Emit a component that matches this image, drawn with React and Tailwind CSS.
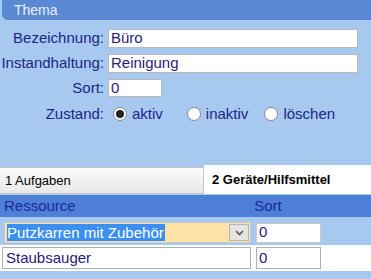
import React from "react";

const Radio = ({ checked, label }) => (
  <label className="flex items-center gap-[5px]">
    <span className="w-[14px] h-[14px] rounded-full bg-white border border-[#8a8a8a] flex items-center justify-center">
      {checked && <span className="w-[8px] h-[8px] rounded-full bg-[#222]" />}
    </span>
    <span>{label}</span>
  </label>
);

const App = () => {
  return (
    <div className="w-[371px] h-[279px] bg-[#a7c9f0] overflow-hidden text-[15px] text-[#1b2585] font-['Liberation_Sans',Arial,sans-serif]">
      <div className="h-[20px] bg-[#5b88d3] rounded-bl-[6px] ml-[2px] flex items-center pl-[12px] text-[14px] text-[#e8eefa]">
        Thema
      </div>

      <div className="flex flex-col pt-[9px]">
        <div className="flex items-center h-[19px]">
          <span className="w-[104px] text-right">Bezeichnung:</span>
          <div className="ml-[4px] w-[250px] h-[19px] bg-white border border-[#b9b9b9] flex items-center pl-[2px] text-[#2b1b74]">Büro</div>
        </div>
        <div className="flex items-center h-[19px] mt-[6px]">
          <span className="w-[104px] text-right">Instandhaltung:</span>
          <div className="ml-[4px] w-[250px] h-[19px] bg-white border border-[#b9b9b9] flex items-center pl-[2px] text-[#2b1b74]">Reinigung</div>
        </div>
        <div className="flex items-center h-[18px] mt-[6px]">
          <span className="w-[104px] text-right">Sort:</span>
          <div className="ml-[4px] w-[54px] h-[18px] bg-white border border-[#b9b9b9] flex items-center pl-[2px] text-[#2b1b74]">0</div>
        </div>
        <div className="flex items-center h-[20px] mt-[7px]">
          <span className="w-[104px] text-right">Zustand:</span>
          <div className="ml-[9px] flex items-center">
            <Radio checked label="aktiv" />
            <div className="ml-[24px]"><Radio label="inaktiv" /></div>
            <div className="ml-[16px]"><Radio label="löschen" /></div>
          </div>
        </div>
      </div>

      <div className="mt-[41px] flex items-end h-[29px] text-[13px] text-black">
        <div className="w-[204px] h-[27px] bg-gradient-to-b from-[#fbfbfb] to-[#e8e8e8] border-t border-r border-b border-[#c4c4c4] flex items-center pl-[5px]">
          1 Aufgaben
        </div>
        <div className="flex-1 h-[29px] bg-white flex items-center pl-[8px] font-bold">
          2 Geräte/Hilfsmittel
        </div>
      </div>

      <div className="mt-[1px] h-[22px] bg-[#4e80d8] flex items-center text-[#1c2a9c]">
        <span className="w-[252px] pl-[4px]">Ressource</span>
        <span className="w-[32px] text-center">Sort</span>
      </div>

      <div className="h-[28px] flex items-center pt-[3px]">
        <div className="ml-[4px] w-[247px] h-[21px] bg-[#fde3a7] border border-[#c9c9c9] flex items-center">
          <span className="ml-[2px] bg-[#3b8ff0] text-white leading-[17px] pr-[1px]">Putzkarren mit Zubehör</span>
          <span className="ml-auto mr-[1px] w-[20px] h-[17px] bg-[#e4e4e4] border border-[#b4b4b4] flex items-center justify-center">
            <svg width="9" height="6" viewBox="0 0 9 6"><path d="M1 1 L4.5 4.5 L8 1" stroke="#555" strokeWidth="1.6" fill="none" /></svg>
          </span>
        </div>
        <div className="ml-[5px] w-[65px] h-[20px] bg-white border border-[#c9c9c9] flex items-center pl-[2px] text-[#2b1b74]">0</div>
      </div>

      <div className="h-[26px] bg-white flex items-center">
        <div className="ml-[2px] w-[249px] h-[22px] bg-white border border-[#b0b0b0] flex items-center pl-[3px] text-[#2b1b74]">Staubsauger</div>
        <div className="ml-[5px] w-[65px] h-[22px] bg-white border border-[#b0b0b0] flex items-center pl-[2px] text-[#2b1b74]">0</div>
      </div>
    </div>
  );
};

export default App;
